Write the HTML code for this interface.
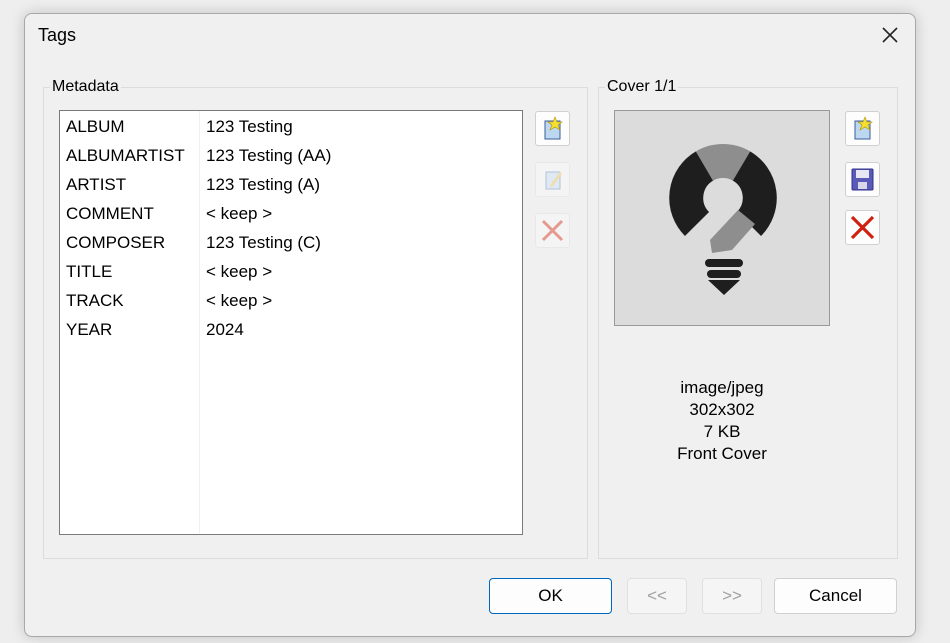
<!DOCTYPE html><html><head><style>
body{margin:0;width:950px;height:643px;background:#eeeeee;font-family:"Liberation Sans",sans-serif;position:relative;overflow:hidden;color:#000}
.win{position:absolute;left:24px;top:13px;width:890px;height:622px;background:#f0f0f0;border:1px solid #a8a8a8;border-radius:8px;box-shadow:0 0 14px rgba(0,0,0,.18)}
.a{position:absolute}
.gb{position:absolute;border:1px solid #dcdcdc}
.lg{position:absolute;background:#f0f0f0;font-size:16px;padding:0 2px}
.btn{position:absolute;width:35px;height:35px;background:#fdfdfd;border:1px solid #d0d0d0;border-radius:3px;box-sizing:border-box}
.btn.dis{background:#f7f7f7;border-color:#e4e4e4;opacity:.6}
.pb{position:absolute;height:36px;box-sizing:border-box;border:1px solid #d0d0d0;border-radius:4px;background:#fdfdfd;font-size:17px;text-align:center;line-height:34px}
.row{position:absolute;font-size:17px}
</style></head><body>
<div class="win"></div>
<div class="a" style="left:38px;top:25px;font-size:18px">Tags</div>
<svg class="a" style="left:881px;top:26px" width="18" height="18"><path d="M2 2L16 16M16 2L2 16" stroke="#222" stroke-width="1.6"/></svg>

<div class="gb" style="left:43px;top:87px;width:543px;height:470px"></div>
<div class="lg" style="left:50px;top:78px">Metadata</div>
<div class="gb" style="left:598px;top:87px;width:298px;height:470px"></div>
<div class="lg" style="left:605px;top:78px">Cover 1/1</div>

<div class="a" style="left:59px;top:110px;width:462px;height:423px;background:#fff;border:1px solid #7a7a7a"></div>
<div class="a" style="left:199px;top:111px;width:1px;height:422px;background:#f0f0f0"></div>
<div class="row" style="left:66px;top:112px;line-height:29px">ALBUM<br>ALBUMARTIST<br>ARTIST<br>COMMENT<br>COMPOSER<br>TITLE<br>TRACK<br>YEAR</div>
<div class="row" style="left:206px;top:112px;line-height:29px">123 Testing<br>123 Testing (AA)<br>123 Testing (A)<br>&lt; keep &gt;<br>123 Testing (C)<br>&lt; keep &gt;<br>&lt; keep &gt;<br>2024</div>

<div class="btn" style="left:535px;top:111px"><svg width="33" height="33"><rect x="9" y="9" width="15" height="18" fill="#bcd8f0" stroke="#3a5d9a"/><path d="M19 5l2 5 5 0-4 3 2 5-5-3-5 3 2-5-4-3 5 0z" fill="#f5e030" stroke="#b09000" stroke-width=".6"/></svg></div>
<div class="btn dis" style="left:535px;top:162px"><svg width="33" height="33"><rect x="10" y="9" width="14" height="17" fill="#d4e6f6" stroke="#8aa6c8"/><path d="M15 21l9-12 2 2-9 12-3 1z" fill="#f0d080"/></svg></div>
<div class="btn dis" style="left:535px;top:213px"><svg width="33" height="33"><path d="M7 7L26 26M26 7L7 26" stroke="#e06050" stroke-width="3"/></svg></div>

<div class="a" style="left:614px;top:110px;width:216px;height:216px;background:#dcdcdc;border:1px solid #999;box-sizing:border-box"></div>
<svg class="a" style="left:614px;top:110px" width="216" height="216">
<g fill="none" stroke-width="34">
<path d="M83 114A37 37 0 0 1 90.5 56" stroke="#1e1e1e"/>
<path d="M90.5 56A37 37 0 0 1 127.5 56" stroke="#8e8e8e"/>
<path d="M127.5 56A37 37 0 0 1 135 114" stroke="#1e1e1e"/>
</g>
<path d="M124 100L141 114 118 140 98 143 96 130Z" fill="#8e8e8e"/>
<rect x="91" y="149" width="38" height="8" rx="4" fill="#1e1e1e"/>
<rect x="93" y="160" width="34" height="8" rx="4" fill="#1e1e1e"/>
<path d="M94 170h32l-16 15z" fill="#1e1e1e"/>
</svg>
<div class="a" style="left:614px;top:377px;width:216px;text-align:center;font-size:17px;line-height:22px">image/jpeg<br>302x302<br>7 KB<br>Front Cover</div>

<div class="btn" style="left:845px;top:111px"><svg width="33" height="33"><rect x="9" y="9" width="15" height="18" fill="#bcd8f0" stroke="#3a5d9a"/><path d="M19 5l2 5 5 0-4 3 2 5-5-3-5 3 2-5-4-3 5 0z" fill="#f5e030" stroke="#b09000" stroke-width=".6"/></svg></div>
<div class="btn" style="left:845px;top:162px"><svg width="33" height="33"><rect x="6" y="6" width="21" height="21" rx="1" fill="#5a5ab8" stroke="#33338a"/><rect x="10" y="7" width="13" height="8" fill="#e8e8f4"/><rect x="12" y="19" width="9" height="7" fill="#d8d8e8"/></svg></div>
<div class="btn" style="left:845px;top:210px"><svg width="33" height="33"><path d="M6 6L27 27M27 6L6 27" stroke="#d02010" stroke-width="3.2"/></svg></div>

<div class="pb" style="left:489px;top:578px;width:123px;border:1px solid #0067c0">OK</div>
<div class="pb" style="left:627px;top:578px;width:60px;color:#a0a0a0;background:#f5f5f5;border-color:#e0e0e0">&lt;&lt;</div>
<div class="pb" style="left:702px;top:578px;width:60px;color:#a0a0a0;background:#f5f5f5;border-color:#e0e0e0">&gt;&gt;</div>
<div class="pb" style="left:774px;top:578px;width:123px">Cancel</div>
</body></html>
